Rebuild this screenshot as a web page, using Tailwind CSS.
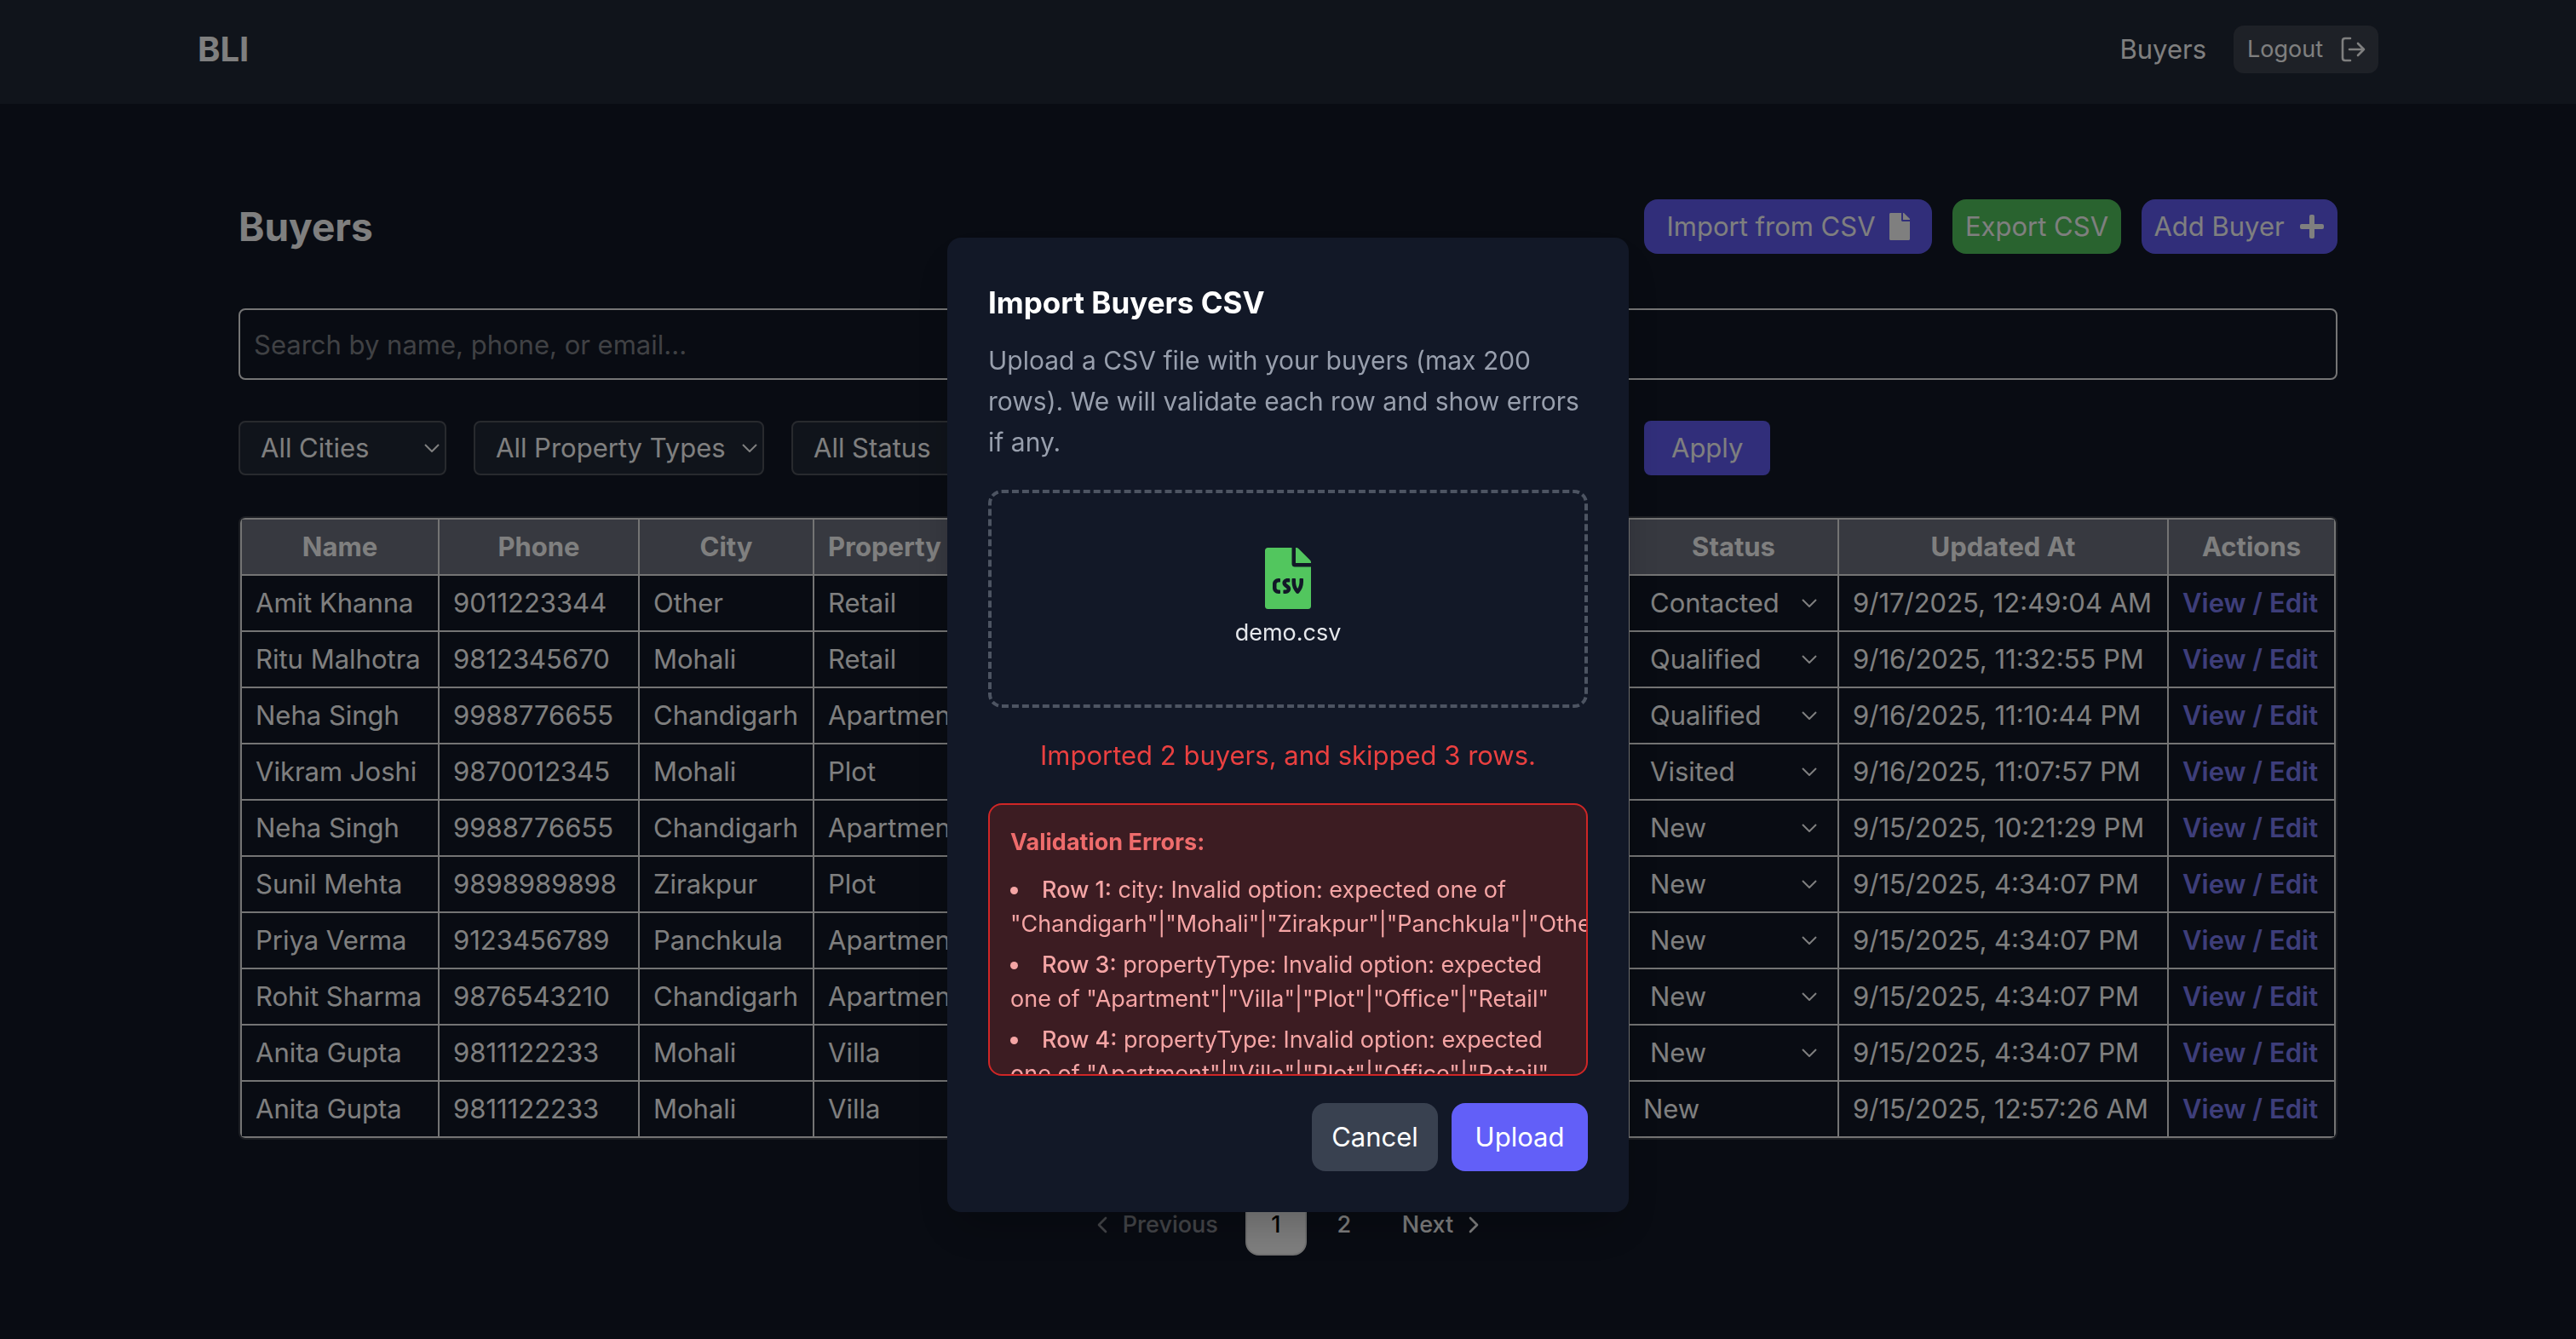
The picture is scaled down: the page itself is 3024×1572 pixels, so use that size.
<!DOCTYPE html>
<html lang="en">
<head>
<meta charset="utf-8">
<title>BLI – Buyers</title>
<script src="https://cdn.jsdelivr.net/npm/@tailwindcss/browser@4"></script>
</head>
<body class="min-h-screen overflow-x-hidden bg-[#121826] font-['Inter',sans-serif] text-[31px] leading-[48px] text-white">
<svg class="hidden" aria-hidden="true">
  <symbol id="chev" viewBox="0 0 18 10"><path d="M1 1l8 8 8-8" fill="none" stroke="currentColor" stroke-width="2"/></symbol>
</svg>

<header class="bg-[#202836]">
  <div class="mx-auto flex max-w-[2560px] items-center justify-between pt-[30px] pb-9">
    <a href="#" class="text-[40px] font-bold">BLI</a>
    <nav class="flex items-center gap-8">
      <a href="#">Buyers</a>
      <button class="flex h-14 w-[170px] items-center justify-between rounded-xl bg-[#3c424e] pr-3 pl-4 text-[27px]">Logout
        <svg class="size-9" viewBox="0 0 36 36" fill="none" stroke="currentColor" stroke-width="2.6" stroke-linecap="round" stroke-linejoin="round"><path d="M15 5H9q-3 0-3 3v20q0 3 3 3h6M14 18h17M24 11l7 7-7 7"/></svg>
      </button>
    </nav>
  </div>
</header>

<main class="mx-auto max-w-[2560px] px-12 pt-28 pb-24">
  <div class="flex items-center justify-between">
    <h1 class="text-[46px] leading-[64px] font-bold">Buyers</h1>
    <div class="flex gap-6">
      <button class="flex h-16 w-[338px] items-center justify-center gap-4 rounded-2xl bg-[#625df5]">Import from CSV
        <svg class="h-8 w-6" viewBox="0 0 384 512" fill="currentColor"><path d="M224 136V0H24C10.700 0 0 10.700 0 24v464c0 13.300 10.700 24 24 24h336c13.300 0 24-10.700 24-24V160H248c-13.200 0-24-10.800-24-24zm160-14.100v6.100H256V0h6.100c6.400 0 12.500 2.500 17 7l97.900 98c4.500 4.500 7 10.600 7 16.900z"/></svg>
      </button>
      <button class="h-16 w-[198px] rounded-2xl bg-[#52c65e]">Export CSV</button>
      <button class="flex h-16 w-[230px] items-center justify-center gap-4 rounded-2xl bg-[#625df5]">Add Buyer
        <svg class="size-8" viewBox="0 0 32 32" fill="currentColor"><path d="M13 4a2 2 0 0 1 2-2h2a2 2 0 0 1 2 2v9h9a2 2 0 0 1 2 2v2a2 2 0 0 1-2 2h-9v9a2 2 0 0 1-2 2h-2a2 2 0 0 1-2-2v-9H4a2 2 0 0 1-2-2v-2a2 2 0 0 1 2-2h9z"/></svg>
      </button>
    </div>
  </div>

  <input type="search" aria-label="Search buyers" placeholder="Search by name, phone, or email..." class="mt-16 block h-[84px] w-full rounded-lg border-2 border-[#ebebeb] bg-transparent px-4 placeholder:text-[#808389]">

  <div class="mt-12 flex gap-8">
    <div class="relative w-[244px]">
      <select aria-label="City" class="h-16 w-full appearance-none rounded-lg border-2 border-[#50545d] bg-[#202836] pl-6"><option>All Cities</option></select>
      <svg class="absolute top-[27px] right-2 h-[10px] w-[18px]"><use href="#chev"/></svg>
    </div>
    <div class="relative w-[341px]">
      <select aria-label="Property type" class="h-16 w-full appearance-none rounded-lg border-2 border-[#50545d] bg-[#202836] pl-6"><option>All Property Types</option></select>
      <svg class="absolute top-[27px] right-2 h-[10px] w-[18px]"><use href="#chev"/></svg>
    </div>
    <select aria-label="Status" class="h-16 w-[969px] appearance-none rounded-lg border-2 border-[#50545d] bg-[#202836] pl-6"><option>All Status</option></select>
    <button class="h-16 rounded-lg bg-[#625df5] px-8">Apply</button>
  </div>

  <div class="mt-12 overflow-hidden rounded-lg border-2 border-[#383c46]">
    <table class="w-full table-fixed border-collapse [&_a]:font-semibold [&_a]:text-[#7c7cf5] [&_select]:w-full [&_select]:appearance-none [&_svg]:absolute [&_svg]:top-[19px] [&_svg]:right-0 [&_svg]:h-[10px] [&_svg]:w-[18px] [&_td]:h-[66px] [&_td]:border-2 [&_td]:border-[#e8e8e8] [&_td]:px-4 [&_td]:whitespace-nowrap [&_th]:h-[66px] [&_th]:border-2 [&_th]:border-[#e8e8e8] [&_th]:px-4 [&_th]:font-bold [&_td>div]:relative [&_td>div]:mx-2">
      <colgroup><col class="w-[232px]"><col class="w-[235px]"><col class="w-[205px]"><col><col class="w-[246px]"><col class="w-[387px]"><col class="w-[196px]"></colgroup>
      <thead class="bg-[#6e7280]">
        <tr><th>Name</th><th>Phone</th><th>City</th><th class="text-left">Property</th><th>Status</th><th>Updated At</th><th>Actions</th></tr>
      </thead>
      <tbody>
        <tr><td>Amit Khanna</td><td>9011223344</td><td>Other</td><td>Retail</td><td><div><select aria-label="Status of Amit Khanna"><option>Contacted</option></select><svg><use href="#chev"/></svg></div></td><td>9/17/2025, 12:49:04 AM</td><td><a href="#">View / Edit</a></td></tr>
        <tr><td>Ritu Malhotra</td><td>9812345670</td><td>Mohali</td><td>Retail</td><td><div><select aria-label="Status of Ritu Malhotra"><option>Qualified</option></select><svg><use href="#chev"/></svg></div></td><td>9/16/2025, 11:32:55 PM</td><td><a href="#">View / Edit</a></td></tr>
        <tr><td>Neha Singh</td><td>9988776655</td><td>Chandigarh</td><td>Apartment</td><td><div><select aria-label="Status of Neha Singh"><option>Qualified</option></select><svg><use href="#chev"/></svg></div></td><td>9/16/2025, 11:10:44 PM</td><td><a href="#">View / Edit</a></td></tr>
        <tr><td>Vikram Joshi</td><td>9870012345</td><td>Mohali</td><td>Plot</td><td><div><select aria-label="Status of Vikram Joshi"><option>Visited</option></select><svg><use href="#chev"/></svg></div></td><td>9/16/2025, 11:07:57 PM</td><td><a href="#">View / Edit</a></td></tr>
        <tr><td>Neha Singh</td><td>9988776655</td><td>Chandigarh</td><td>Apartment</td><td><div><select aria-label="Status of Neha Singh"><option>New</option></select><svg><use href="#chev"/></svg></div></td><td>9/15/2025, 10:21:29 PM</td><td><a href="#">View / Edit</a></td></tr>
        <tr><td>Sunil Mehta</td><td>9898989898</td><td>Zirakpur</td><td>Plot</td><td><div><select aria-label="Status of Sunil Mehta"><option>New</option></select><svg><use href="#chev"/></svg></div></td><td>9/15/2025, 4:34:07 PM</td><td><a href="#">View / Edit</a></td></tr>
        <tr><td>Priya Verma</td><td>9123456789</td><td>Panchkula</td><td>Apartment</td><td><div><select aria-label="Status of Priya Verma"><option>New</option></select><svg><use href="#chev"/></svg></div></td><td>9/15/2025, 4:34:07 PM</td><td><a href="#">View / Edit</a></td></tr>
        <tr><td>Rohit Sharma</td><td>9876543210</td><td>Chandigarh</td><td>Apartment</td><td><div><select aria-label="Status of Rohit Sharma"><option>New</option></select><svg><use href="#chev"/></svg></div></td><td>9/15/2025, 4:34:07 PM</td><td><a href="#">View / Edit</a></td></tr>
        <tr><td>Anita Gupta</td><td>9811122233</td><td>Mohali</td><td>Villa</td><td><div><select aria-label="Status of Anita Gupta"><option>New</option></select><svg><use href="#chev"/></svg></div></td><td>9/15/2025, 4:34:07 PM</td><td><a href="#">View / Edit</a></td></tr>
        <tr><td>Anita Gupta</td><td>9811122233</td><td>Mohali</td><td>Villa</td><td>New</td><td>9/15/2025, 12:57:26 AM</td><td><a href="#">View / Edit</a></td></tr>
      </tbody>
    </table>
  </div>

  <nav aria-label="Pagination" class="mt-16 flex justify-center gap-2 text-[27px] font-medium">
    <a href="#" class="flex h-[72px] items-center gap-2 px-6 opacity-50"><svg class="size-8" viewBox="0 0 24 24" fill="none" stroke="currentColor" stroke-width="2" stroke-linecap="round" stroke-linejoin="round"><path d="m15 18-6-6 6-6"/></svg>Previous</a>
    <a href="#" aria-current="page" class="flex size-[72px] items-center justify-center rounded-2xl border-2 border-[#e5e5e5] bg-white text-black">1</a>
    <a href="#" class="flex size-[72px] items-center justify-center">2</a>
    <a href="#" class="flex h-[72px] items-center gap-2 px-6">Next<svg class="size-8" viewBox="0 0 24 24" fill="none" stroke="currentColor" stroke-width="2" stroke-linecap="round" stroke-linejoin="round"><path d="m9 18 6-6-6-6"/></svg></a>
  </nav>
</main>

<div class="fixed inset-0 flex items-start justify-center bg-black/50 pt-[279px]">
  <section role="dialog" aria-modal="true" aria-labelledby="dlg-title" class="w-[800px] rounded-2xl bg-[#121827] p-12 shadow-2xl">
    <h2 id="dlg-title" class="text-[35px] leading-[56px] font-bold">Import Buyers CSV</h2>
    <p class="mt-4 text-[30px] text-[#989fad]">Upload a CSV file with your buyers (max 200 rows). We will validate each row and show errors if any.</p>
    <label class="mt-8 flex h-64 flex-col items-center justify-center gap-2 rounded-2xl border-4 border-dashed border-[#4d5462] text-[27px] leading-[40px] text-[#e5e7eb]">
      <input type="file" accept=".csv" class="sr-only">
      <svg class="h-[72px] w-[54px] text-[#52c65e]" viewBox="0 0 384 512" fill="currentColor"><path fill-rule="evenodd" d="M224 136V0H24C10.700 0 0 10.700 0 24v464c0 13.300 10.700 24 24 24h336c13.300 0 24-10.700 24-24V160H248c-13.200 0-24-10.800-24-24zm-96 144c0 4.420-3.580 8-8 8h-8c-8.840 0-16 7.160-16 16v32c0 8.840 7.160 16 16 16h8c4.420 0 8 3.580 8 8v16c0 4.420-3.580 8-8 8h-8c-26.510 0-48-21.490-48-48v-32c0-26.510 21.490-48 48-48h8c4.420 0 8 3.580 8 8v16zm44.270 104H160c-4.420 0-8-3.580-8-8v-16c0-4.420 3.580-8 8-8h12.270c5.950 0 10.410-3.500 10.410-6.620 0-1.300-.75-2.660-2.120-3.840l-21.890-18.770c-8.470-7.220-13.330-17.480-13.330-28.140 0-21.300 19.020-38.620 42.410-38.620H200c4.420 0 8 3.580 8 8v16c0 4.420-3.580 8-8 8h-12.270c-5.950 0-10.410 3.500-10.410 6.620 0 1.300.75 2.660 2.120 3.840l21.890 18.770c8.470 7.220 13.330 17.480 13.330 28.140.01 21.290-19 38.620-42.390 38.620zM256 264v20.800c0 20.270 5.700 40.170 16 56.880 10.300-16.700 16-36.610 16-56.880V264c0-4.420 3.580-8 8-8h16c4.420 0 8 3.580 8 8v20.800c0 35.480-12.880 68.890-36.280 94.090-3.020 3.250-7.270 5.110-11.720 5.110s-8.700-1.860-11.720-5.110c-23.400-25.200-36.280-58.610-36.280-94.090V264c0-4.420 3.580-8 8-8h16c4.420 0 8 3.580 8 8zm121-159L279.100 7c-4.500-4.500-10.600-7-17-7H256v128h128v-6.100c0-6.300-2.500-12.400-7-16.900z"/></svg>
      demo.csv
    </label>
    <p class="mt-8 text-center text-[#ea4040]">Imported 2 buyers, and skipped 3 rows.</p>
    <div class="mt-8 h-80 overflow-hidden rounded-2xl border-2 border-[#cf2626] bg-[#3c1c22] p-6 text-[27px] leading-[40px] text-[#f5a5a5]">
      <h3 class="font-bold text-[#ee6c6c]">Validation Errors:</h3>
      <ul class="mt-4 list-inside list-disc space-y-2">
        <li><span class="font-medium">Row 1:</span> city: Invalid option: expected one of "Chandigarh"|"Mohali"|"Zirakpur"|"Panchkula"|"Other"</li>
        <li><span class="font-medium">Row 3:</span> propertyType: Invalid option: expected one of "Apartment"|"Villa"|"Plot"|"Office"|"Retail"</li>
        <li><span class="font-medium">Row 4:</span> propertyType: Invalid option: expected one of "Apartment"|"Villa"|"Plot"|"Office"|"Retail"</li>
      </ul>
    </div>
    <div class="mt-8 flex justify-end gap-4">
      <button class="h-20 w-[148px] rounded-2xl bg-[#394150]">Cancel</button>
      <button class="h-20 w-[160px] rounded-2xl bg-[#625ff8]">Upload</button>
    </div>
  </section>
</div>
</body>
</html>
